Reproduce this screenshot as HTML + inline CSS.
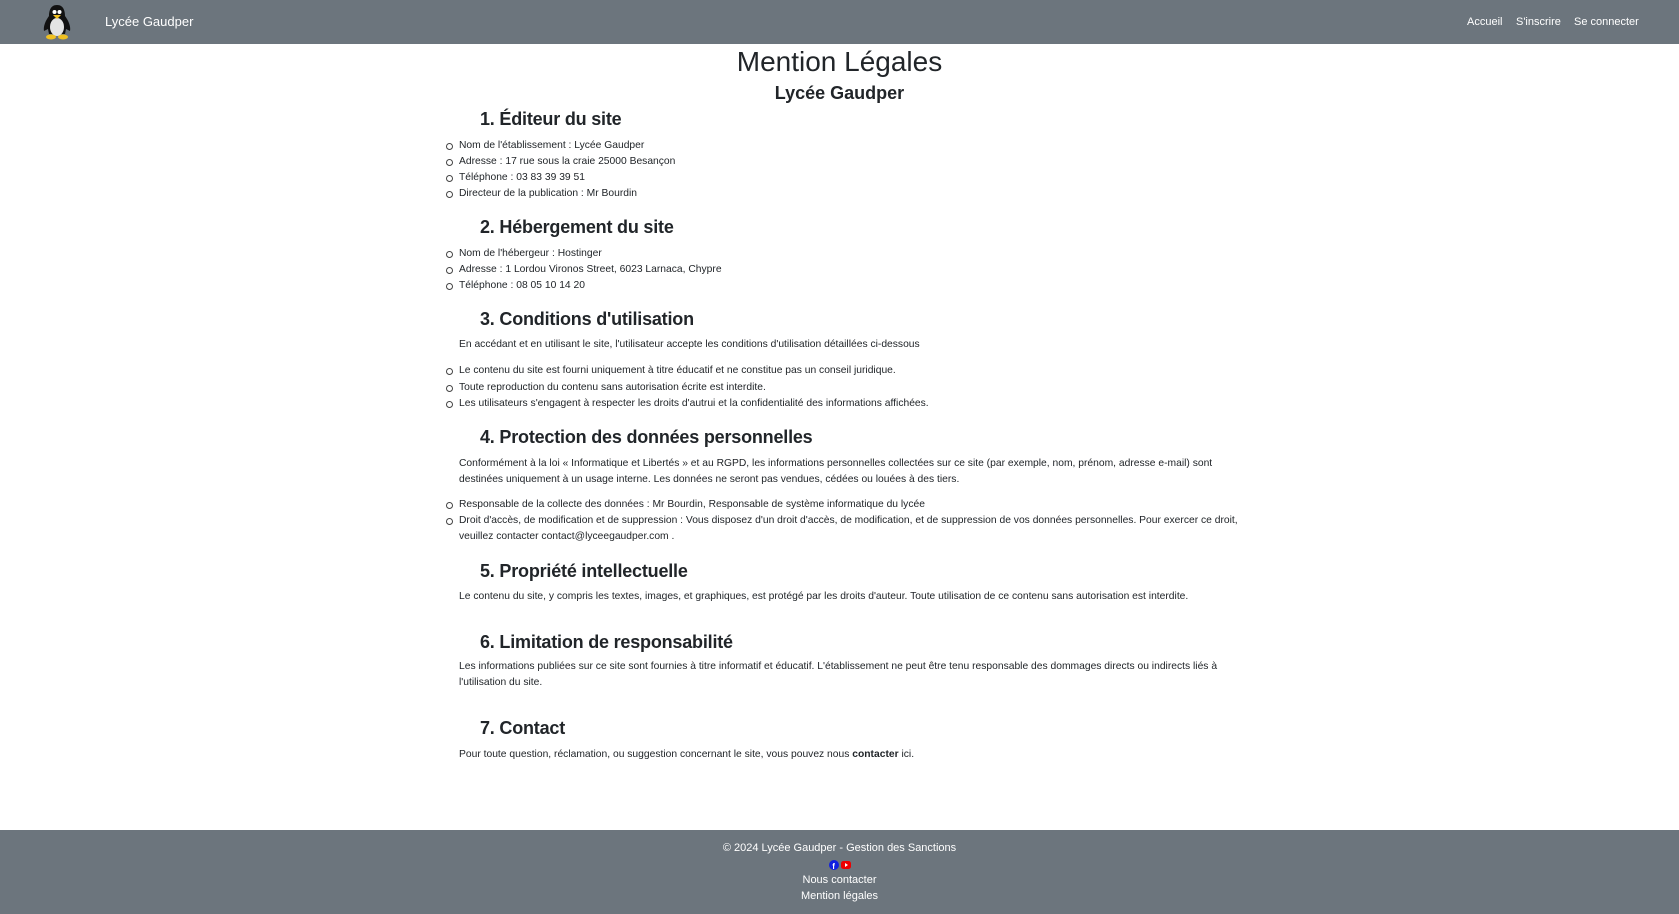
<!DOCTYPE html>
<html><head><meta charset="utf-8"><style>
*{margin:0;padding:0;box-sizing:border-box}
body{width:1679px;height:914px;position:relative;background:#fff;font-family:"Liberation Sans",sans-serif;color:#212529;overflow:hidden}
.nav{position:absolute;left:0;top:0;width:1679px;height:44px;background:#6c757d}
.nav a{position:absolute;color:#fff;font-size:11px;top:16px;text-decoration:none}
.brand{position:absolute;left:105px;top:14px;color:#fff;font-size:13px}
.a{position:absolute;white-space:nowrap}
.h3{position:absolute;left:480px;font-size:18px;font-weight:bold;color:#212529;letter-spacing:-0.2px}
.t{position:absolute;left:459px;font-size:10.3px;line-height:16px;width:795px}
.li{position:absolute;left:459px;font-size:10.3px;line-height:16px;width:810px}
.li:before{content:"";position:absolute;left:-13px;top:5px;width:5px;height:5px;border:1px solid #444;border-radius:50%}
.foot{position:absolute;left:0;top:830px;width:1679px;height:84px;background:#6c757d;color:#fff;font-size:11px;text-align:center}
.foot div{position:absolute;width:100%}
</style></head><body>
<div class="nav">
<svg style="position:absolute;left:40px;top:4px" width="34" height="36" viewBox="0 0 34 36">
<path d="M17 1 C10 1 9 8 9 12 C6 16 3 22 4 27 L8 25 L9 30 L25 30 L26 25 L30 27 C31 22 28 16 25 12 C25 8 24 1 17 1Z" fill="#111"/>
<ellipse cx="17" cy="23" rx="7" ry="9" fill="#e4e4e4"/>
<circle cx="14.5" cy="8" r="2" fill="#fff"/><circle cx="19.5" cy="8" r="2" fill="#fff"/>
<path d="M13 11 L17 15 L21 11Z" fill="#f0c020"/>
<ellipse cx="11" cy="33" rx="5" ry="2.5" fill="#f0c020"/><ellipse cx="23" cy="33" rx="5" ry="2.5" fill="#f0c020"/>
</svg>
<div class="brand">Lycée Gaudper</div>
<a style="left:1467px">Accueil</a><a style="left:1516px">S'inscrire</a><a style="left:1574px">Se connecter</a>
</div>
<div class="a" style="left:0;width:1679px;text-align:center;top:45px;font-size:28px;line-height:34px">Mention Légales</div>
<div class="a" style="left:0;width:1679px;text-align:center;top:81px;font-size:18px;line-height:24px;font-weight:bold">Lycée Gaudper</div>

<div class="h3" style="top:109px">1. Éditeur du site</div>
<div class="li" style="top:138px">Nom de l'établissement : Lycée Gaudper</div>
<div class="li" style="top:154px">Adresse : 17 rue sous la craie 25000 Besançon</div>
<div class="li" style="top:170px">Téléphone : 03 83 39 39 51</div>
<div class="li" style="top:186px">Directeur de la publication : Mr Bourdin</div>

<div class="h3" style="top:217px">2. Hébergement du site</div>
<div class="li" style="top:246px">Nom de l'hébergeur : Hostinger</div>
<div class="li" style="top:262px">Adresse : 1 Lordou Vironos Street, 6023 Larnaca, Chypre</div>
<div class="li" style="top:278px">Téléphone : 08 05 10 14 20</div>

<div class="h3" style="top:309px">3. Conditions d'utilisation</div>
<div class="t" style="top:337px">En accédant et en utilisant le site, l'utilisateur accepte les conditions d'utilisation détaillées ci-dessous</div>
<div class="li" style="top:363px">Le contenu du site est fourni uniquement à titre éducatif et ne constitue pas un conseil juridique.</div>
<div class="li" style="top:380px">Toute reproduction du contenu sans autorisation écrite est interdite.</div>
<div class="li" style="top:396px">Les utilisateurs s'engagent à respecter les droits d'autrui et la confidentialité des informations affichées.</div>

<div class="h3" style="top:427px">4. Protection des données personnelles</div>
<div class="t" style="top:456px">Conformément à la loi « Informatique et Libertés » et au RGPD, les informations personnelles collectées sur ce site (par exemple, nom, prénom, adresse e-mail) sont destinées uniquement à un usage interne. Les données ne seront pas vendues, cédées ou louées à des tiers.</div>
<div class="li" style="top:497px">Responsable de la collecte des données : Mr Bourdin, Responsable de système informatique du lycée</div>
<div class="li" style="top:513px">Droit d'accès, de modification et de suppression : Vous disposez d'un droit d'accès, de modification, et de suppression de vos données personnelles. Pour exercer ce droit, veuillez contacter contact@lyceegaudper.com .</div>

<div class="h3" style="top:561px">5. Propriété intellectuelle</div>
<div class="t" style="top:589px">Le contenu du site, y compris les textes, images, et graphiques, est protégé par les droits d'auteur. Toute utilisation de ce contenu sans autorisation est interdite.</div>

<div class="h3" style="top:632px">6. Limitation de responsabilité</div>
<div class="t" style="top:659px">Les informations publiées sur ce site sont fournies à titre informatif et éducatif. L'établissement ne peut être tenu responsable des dommages directs ou indirects liés à l'utilisation du site.</div>

<div class="h3" style="top:718px">7. Contact</div>
<div class="t" style="top:747px">Pour toute question, réclamation, ou suggestion concernant le site, vous pouvez nous <b>contacter</b> ici.</div>

<div class="foot">
<div style="top:12px">© 2024 Lycée Gaudper - Gestion des Sanctions</div>
<div style="top:29px;height:12px">
<svg width="24" height="12" viewBox="0 0 24 12"><circle cx="6" cy="6" r="5" fill="#1020e0"/><text x="4.3" y="10" font-size="8" fill="#fff" font-family="Liberation Sans" font-weight="bold">f</text><rect x="13" y="2" width="10" height="8" rx="2.5" fill="#e00"/><path d="M17 4 L20 6 L17 8Z" fill="#fff"/></svg>
</div>
<div style="top:44px">Nous contacter</div>
<div style="top:60px">Mention légales</div>
</div>
</body></html>
